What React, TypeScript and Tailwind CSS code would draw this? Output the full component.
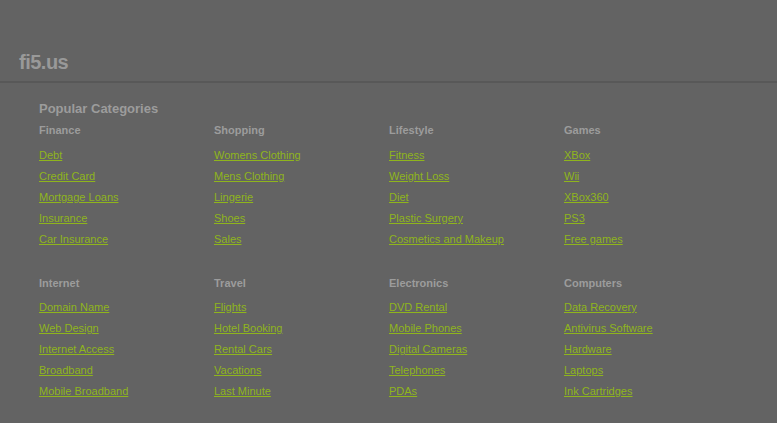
const groups = [
  [
    { title: 'Finance', links: ['Debt', 'Credit Card', 'Mortgage Loans', 'Insurance', 'Car Insurance'] },
    { title: 'Shopping', links: ['Womens Clothing', 'Mens Clothing', 'Lingerie', 'Shoes', 'Sales'] },
    { title: 'Lifestyle', links: ['Fitness', 'Weight Loss', 'Diet', 'Plastic Surgery', 'Cosmetics and Makeup'] },
    { title: 'Games', links: ['XBox', 'Wii', 'XBox360', 'PS3', 'Free games'] },
  ],
  [
    { title: 'Internet', links: ['Domain Name', 'Web Design', 'Internet Access', 'Broadband', 'Mobile Broadband'] },
    { title: 'Travel', links: ['Flights', 'Hotel Booking', 'Rental Cars', 'Vacations', 'Last Minute'] },
    { title: 'Electronics', links: ['DVD Rental', 'Mobile Phones', 'Digital Cameras', 'Telephones', 'PDAs'] },
    { title: 'Computers', links: ['Data Recovery', 'Antivirus Software', 'Hardware', 'Laptops', 'Ink Cartridges'] },
  ],
];

function App() {
  return (
    <div className="h-[423px] w-[777px] overflow-hidden bg-[#636363] font-['Liberation_Sans',Arial,sans-serif]">
      <header className="h-[83px] border-b-2 border-[#585858] px-[19px] pt-[50px]">
        <h1 className="text-[20px] font-bold leading-[24px] tracking-[-0.5px] text-[#999999]">fi5.us</h1>
      </header>

      <main className="px-[39px] pt-[18px]">
        <h2 className="text-[13px] font-bold leading-[16px] text-[#9c9c9c]">Popular Categories</h2>
        <div className="mt-[3px] grid gap-[23px]">
          {groups.map((row, i) => (
            <div key={i} className="grid grid-cols-[175px_175px_175px_175px]">
              {row.map((cat) => (
                <div key={cat.title}>
                  <h3
                    className={`${i === 0 ? 'mb-[4px]' : 'mb-[3px]'} text-[11px] font-bold leading-[21px] text-[#9c9c9c]`}
                  >
                    {cat.title}
                  </h3>
                  <ul>
                    {cat.links.map((link) => (
                      <li key={link} className="text-[11px] leading-[21px]">
                        <a href="#" className="text-[#8fb51c] underline">
                          {link}
                        </a>
                      </li>
                    ))}
                  </ul>
                </div>
              ))}
            </div>
          ))}
        </div>
      </main>
    </div>
  );
}

export default App;
